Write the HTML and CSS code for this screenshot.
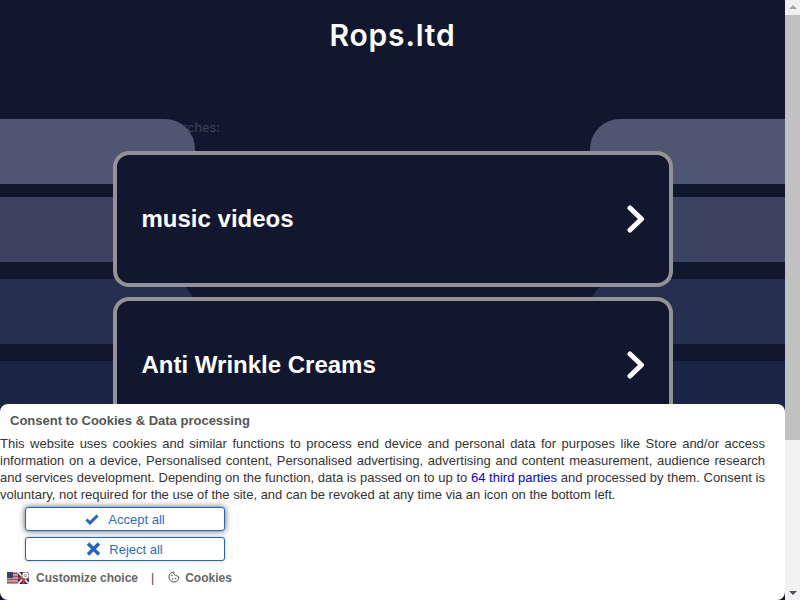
FILE: index.html
```html
<!DOCTYPE html>
<html lang="en">
<head>
  <meta charset="UTF-8" />
  <title>Rops.ltd</title>
  <link rel="stylesheet" href="styles.css">
</head>
<body>
  <div id="page">
    <h1 class="siteTitle">Rops.ltd</h1>
    <div class="related">Related searches:</div>

    <div class="backdrop">
      <div class="band band1"><span class="bandLeft"></span><span class="bandRight"></span></div>
      <div class="band band2"><span class="bandLeft"></span><span class="bandRight"></span></div>
      <div class="band band3"><span class="bandLeft"></span><span class="bandRight"></span></div>
      <div class="band band4"><span class="bandLeft"></span><span class="bandRight"></span></div>
    </div>

    <div class="linkList">
      <a class="linkCard" href="#">
        <span>music videos</span>
        <svg class="chevron" viewBox="0 0 18 28" width="18" height="28"><path d="M3 3 L14.5 14 L3 25" fill="none" stroke="#fff" stroke-width="5" stroke-linecap="round" stroke-linejoin="round"/></svg>
      </a>
      <a class="linkCard" href="#">
        <span>Anti Wrinkle Creams</span>
        <svg class="chevron" viewBox="0 0 18 28" width="18" height="28"><path d="M3 3 L14.5 14 L3 25" fill="none" stroke="#fff" stroke-width="5" stroke-linecap="round" stroke-linejoin="round"/></svg>
      </a>
    </div>

    <div id="consent">
      <div class="consentTitle">Consent to Cookies &amp; Data processing</div>
      <p class="consentText">This website uses cookies and similar functions to process end device and personal data for purposes like Store and/or access information on a device, Personalised content, Personalised advertising, advertising and content measurement, audience research and services development. Depending on the function, data is passed on to up to <a href="#">64 third parties</a> and processed by them. Consent is voluntary, not required for the use of the site, and can be revoked at any time via an icon on the bottom left.</p>
      <div class="consentButtons">
        <button class="consentBtn acceptBtn">
          <svg viewBox="0 0 14 12" width="14" height="12"><path d="M1.5 6.5 L5 10 L12.5 2.5" fill="none" stroke="#1f66c1" stroke-width="3"/></svg>
          Accept all
        </button>
        <button class="consentBtn rejectBtn">
          <svg viewBox="0 0 15 14" width="15" height="14"><path d="M2 1.5 L13 12.5 M13 1.5 L2 12.5" fill="none" stroke="#1f66c1" stroke-width="3.4"/></svg>
          Reject all
        </button>
      </div>
      <div class="consentFooter">
        <svg class="flag" viewBox="0 0 22 12" width="22" height="12">
          <rect width="11" height="12" fill="#c9b5b5"/>
          <path d="M0 1.5h11M0 4.5h11M0 7.5h11M0 10.5h11" stroke="#a8525a" stroke-width="1.4"/>
          <rect width="6" height="6" fill="#39406a"/>
          <rect x="11" width="11" height="12" fill="#1d2456"/>
          <path d="M11 0 L22 12 M22 0 L11 12" stroke="#e8dada" stroke-width="2"/>
          <path d="M16.5 0v12M11 6h11" stroke="#c23a3f" stroke-width="2.4"/>
          <circle cx="18.5" cy="3.5" r="3.6" fill="#fff" stroke="#777" stroke-width="1"/>
          <circle cx="18.5" cy="3.5" r="1.2" fill="#fff" stroke="#777" stroke-width=".8"/>
        </svg>
        <a class="footerLink" href="#">Customize choice</a>
        <span class="footerSep">|</span>
        <svg class="cookie" viewBox="0 0 12 12" width="12" height="12">
          <path d="M6 1 A5 5 0 1 0 11 6 A2.2 2.2 0 0 1 8.6 4.2 A2.2 2.2 0 0 1 6 1 Z" fill="none" stroke="#555" stroke-width="1"/>
          <circle cx="4" cy="4.5" r=".8" fill="#555"/><circle cx="7.5" cy="7.5" r=".8" fill="#555"/><circle cx="4.5" cy="8" r=".8" fill="#555"/>
        </svg>
        <a class="footerLink" href="#">Cookies</a>
      </div>
    </div>
  </div>

  <div id="scrollbar">
    <span class="arrowUp"></span>
    <div class="scrollThumb"></div>
    <span class="arrowDown"></span>
  </div>
</body>
</html>
```

FILE: styles.css
```css
* {
  box-sizing: border-box;
}
html, body {
  margin: 0;
  height: 100%;
  overflow: hidden;
}
body {
  display: flex;
  background: #11172e;
  color: white;
  font-family: "Liberation Sans", Arial, sans-serif;
}
#page {
  position: relative;
  flex: 1;
  min-width: 0;
  overflow: hidden;
  background: #11172e;
  padding-top: 16px;
}
#scrollbar {
  flex: 0 0 15px;
  display: flex;
  flex-direction: column;
  align-items: center;
  background: #f1f1f1;
}
.scrollThumb {
  width: 100%;
  height: 425px;
  background: #c1c1c1;
}
.arrowUp, .arrowDown {
  width: 0;
  height: 4px;
  flex-basis: 4px;
  border-left: 4px solid transparent;
  border-right: 4px solid transparent;
}
.arrowUp {
  border-bottom: 4px solid #a3a3a3;
  margin: 5px 0 6px;
}
.arrowDown {
  border-top: 4px solid #505050;
  margin: auto 0 5px;
}
.backdrop {
  position: absolute;
  top: 119px;
  left: 0;
  right: 0;
  display: flex;
  flex-direction: column;
  gap: 13px;
}
.band {
  display: flex;
  justify-content: space-between;
  height: 65px;
}
.band3 {
  margin-top: 4px;
}
.band4 {
  margin-top: 4px;
  height: 200px;
}
.bandLeft, .bandRight {
  width: 195px;
}
.bandLeft {
  border-top-right-radius: 30px;
}
.bandRight {
  border-top-left-radius: 30px;
}
.band1 span { background: #4e5672; }
.band2 span { background: #3b4361; border-radius: 0; }
.band3 span { background: #262f50; }
.band4 span {
  background: repeating-conic-gradient(#1c2748 0 25%, #1a2344 0 50%) 0 0 / 2px 2px;
  border-radius: 0;
}
.siteTitle {
  margin: 0;
  text-align: center;
  font-family: Inter, sans-serif;
  font-size: 30px;
  font-weight: 600;
  letter-spacing: 0.8px;
  line-height: 38px;
}
.related {
  margin: 66px 0 0 113px;
  height: 16px;
  font-family: Inter, sans-serif;
  font-size: 12.7px;
  line-height: 16px;
  color: #3d4358;
}
.linkList {
  position: relative;
  width: 560px;
  margin: 15px auto 0;
  display: flex;
  flex-direction: column;
  gap: 10px;
}
.linkCard {
  display: flex;
  align-items: center;
  justify-content: space-between;
  height: 136px;
  padding: 0 24px 0 25px;
  background: #11172e;
  border: 4px solid #939393;
  border-radius: 16px;
  color: white;
  font-size: 24px;
  font-weight: bold;
  text-decoration: none;
}
#consent {
  position: absolute;
  left: 0;
  right: 0;
  bottom: 0;
  height: 196px;
  background: white;
  border-radius: 8px;
  color: #333;
  font-size: 13px;
}
.consentTitle {
  padding: 9px 10px 0;
  height: 31px;
  font-weight: bold;
  line-height: 15px;
  color: #555;
}
.consentText {
  margin: 0;
  width: 765px;
  line-height: 17px;
  text-align: justify;
}
.consentText a {
  color: #0000ee;
  text-decoration: none;
}
.consentButtons {
  margin: 4px 0 0 25px;
  width: 200px;
  display: flex;
  flex-direction: column;
  gap: 6px;
}
.consentBtn {
  height: 24px;
  padding: 0;
  display: flex;
  align-items: center;
  justify-content: center;
  gap: 9px;
  background: white;
  border: 1px solid #1f66c1;
  border-radius: 3px;
  color: #2a6cc6;
  font: 13px "Liberation Sans", Arial, sans-serif;
}
.acceptBtn {
  box-shadow: 0 0 6px #555;
}
.rejectBtn {
  gap: 8px;
  padding-right: 1px;
  box-shadow: 0 0 3px #bbb;
}
.consentFooter {
  margin: 10px 0 0 7px;
  display: flex;
  align-items: center;
  font-size: 12px;
  font-weight: bold;
  color: #666;
}
.flag {
  margin-right: 7px;
}
.footerLink {
  color: #666;
  text-decoration: none;
}
.footerSep {
  margin: 0 14px 0 13px;
  font-weight: normal;
  color: #444;
}
.cookie {
  margin-right: 5px;
  margin-top: -3px;
}
```
